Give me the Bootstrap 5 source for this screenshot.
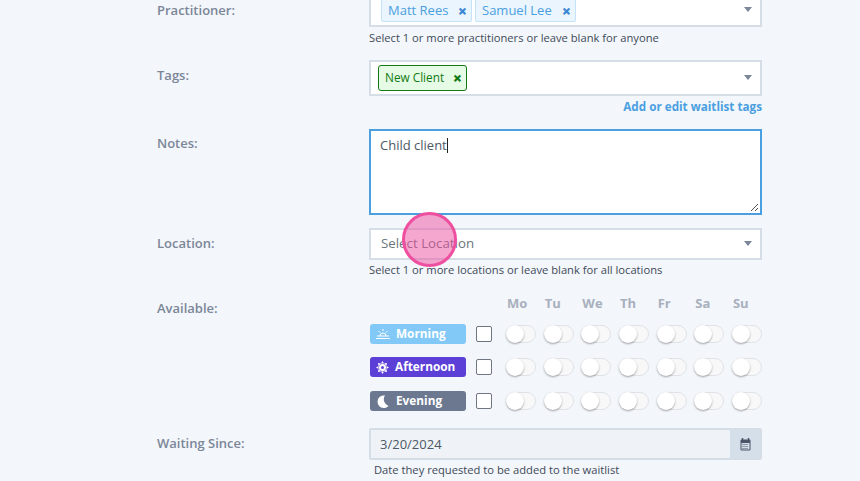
<!DOCTYPE html>
<html lang="en"><head><meta charset="utf-8"><title>Waitlist</title>
<link href="https://cdn.jsdelivr.net/npm/bootstrap@5.3.0/dist/css/bootstrap.min.css" rel="stylesheet">
<style>
html,body{height:481px;overflow:hidden}
body{background:#f3f6fb;font-family:"Open Sans",sans-serif;color:#3e4a59;position:relative}
.sheet{width:605px;margin:-6px 0 0 157px}
.frow{display:flex}
.flabel{width:212px;flex:none;font-size:13px;font-weight:600;color:#7b8698;line-height:18px;padding-top:6px}
.lab-p{padding-top:7px}
.lab-n{padding-top:5px}
.fbody{width:393px;flex:none}
.selbox{background:#fff;border:2px solid #d5dde7;display:flex;align-items:center;justify-content:space-between;padding:0 8px 0 7px;font-size:13px}
.caret{width:0;height:0;border-left:4px solid transparent;border-right:4px solid transparent;border-top:5px solid #7b8698;flex:none;margin-top:-2px}
.chip{display:inline-flex;align-items:center;justify-content:space-between;font-size:13px;height:23px;padding:0 4px 0 6px;border:1px solid #c4e2f8;background:#eaf5fd;color:#4a9fe0;border-radius:2px;margin-right:3px}
.chip b{font-size:16px;line-height:1;font-weight:800;color:#3b87d6}
.chip-a{width:91px}.chip-b{width:101px}
.chipg{width:89px;border-color:#127a12;background:#e6fbe6;color:#127a12;border-radius:3px;font-size:11.8px;height:26px}
.chipg b{color:#127a12}
.hint{font-size:11.2px;line-height:15px;color:#3e4a59;margin-top:2px}
.hint-p{margin-top:3px}
.hint-d{padding-left:5px}
.tlink{font-size:11.7px;font-weight:700;color:#4a9fe0;text-align:right;line-height:16px;text-decoration:none;display:block;margin-top:2px}
.notes{height:86px;background:#fff;border:2px solid #4a9fe0;font-size:13px;padding:5px 9px;line-height:18px;position:relative;color:#4d5866}
.cursor{display:inline-block;width:1px;height:15px;background:#222;vertical-align:-3px}
.grip{position:absolute;right:1px;bottom:1px}
.dhead{display:flex;margin:1px 0 12px 133px}
.dhead span{width:37.67px;flex:none;font-size:13px;font-weight:700;color:#a8b0bd;line-height:18px;padding-left:5px}
.slotrow{display:flex;align-items:center;height:20px;padding-left:1px}
.gap-a{margin-bottom:13px}.gap-b{margin-bottom:14px}
.slot{width:96px;height:20px;border-radius:3px;color:#fff;font-size:11.8px;font-weight:700;display:flex;align-items:center;padding-left:6px;gap:6px;flex:none}
.morn{background:#83c9f8}.aft{background:#5c3fd6}.eve{background:#6c788f;padding-left:7px;gap:7px}
.tick{width:16px;height:16px;border:1.5px solid #6e7682;border-radius:2px;background:#fff;margin-left:10px;margin-right:14px;flex:none}
.tog{width:30px;height:18px;border:1px solid #dfe2e6;border-radius:9px;background:#f8f8f8;margin-right:7.67px;flex:none;position:relative}
.tog::before{content:"";position:absolute;left:-1px;top:-1px;width:18px;height:18px;border-radius:50%;background:#fff;box-shadow:0 1px 2px rgba(0,0,0,.35)}
.dateg{display:flex;height:32px;border:2px solid #d5dde7;border-radius:2px;background:#eff3f7;font-size:13px}
.dateg .dv{flex:1;padding-left:9px;line-height:28px;color:#4d5866}
.dateg .da{width:30px;background:#d5dfea;display:flex;align-items:center;justify-content:center}
.blob{position:absolute;left:402px;top:212px;width:55px;height:55px;border-radius:50%;background:rgba(238,80,160,.5);border:3px solid #ee4f9f}
</style></head><body>
<div class="sheet">
  <div class="frow" style="height:66px">
    <div class="flabel lab-p">Practitioner:</div>
    <div class="fbody">
      <div class="selbox" style="height:33px;padding-left:10px"><div class="d-flex"><span class="chip chip-a">Matt Rees<b>×</b></span><span class="chip chip-b">Samuel Lee<b>×</b></span></div><i class="caret"></i></div>
      <div class="hint hint-p">Select 1 or more practitioners or leave blank for anyone</div>
    </div>
  </div>
  <div class="frow" style="height:69px">
    <div class="flabel">Tags:</div>
    <div class="fbody">
      <div class="selbox" style="height:36px"><span class="chip chipg">New Client<b>×</b></span><i class="caret"></i></div>
      <a class="tlink" href="#">Add or edit waitlist tags</a>
    </div>
  </div>
  <div class="frow" style="height:99px">
    <div class="flabel lab-n">Notes:</div>
    <div class="fbody"><div class="notes">Child client<span class="cursor"></span>
      <svg class="grip" width="9" height="9" viewBox="0 0 9 9"><path d="M8 1 1 8M8 5 5 8" stroke="#555" fill="none"/></svg></div></div>
  </div>
  <div class="frow" style="height:65px">
    <div class="flabel">Location:</div>
    <div class="fbody">
      <div class="selbox" style="height:32px;padding-left:10px;color:#6c757d;font-size:13.3px"><span>Select Location</span><i class="caret"></i></div>
      <div class="hint">Select 1 or more locations or leave blank for all locations</div>
    </div>
  </div>
  <div class="frow" style="height:135px">
    <div class="flabel">Available:</div>
    <div class="fbody">
      <div class="dhead"><span>Mo</span><span>Tu</span><span>We</span><span>Th</span><span>Fr</span><span>Sa</span><span>Su</span></div>
      <div class="slotrow gap-a"><div class="slot morn"><svg width="14" height="12" viewBox="0 0 14 12" fill="none" stroke="#fff"><path d="M0 10.500h14M1 8h12M4 8a3 3 0 0 1 6 0M7 1v2M2.500 3 4 4.500M11.500 3 10 4.500"/></svg>Morning</div><i class="tick"></i><i class="tog"></i><i class="tog"></i><i class="tog"></i><i class="tog"></i><i class="tog"></i><i class="tog"></i><i class="tog"></i></div>
      <div class="slotrow gap-b"><div class="slot aft"><svg width="13" height="13" viewBox="0 0 13 13" fill="#fff"><circle cx="6.500" cy="6.500" r="3.500"/><path d="M6.500 0 8 2.500H5zM6.500 13 5 10.500h3zM0 6.500 2.500 5v3zM13 6.500 10.500 8V5zM2 2l3 .6L2.600 5zM11 2l-.6 3L8 2.600zM2 11l.6-3L5 10.400zM11 11l-3-.6L10.400 8z"/><circle cx="6.500" cy="6.500" r="1.500" fill="#5c3fd6"/></svg>Afternoon</div><i class="tick"></i><i class="tog"></i><i class="tog"></i><i class="tog"></i><i class="tog"></i><i class="tog"></i><i class="tog"></i><i class="tog"></i></div>
      <div class="slotrow"><div class="slot eve"><svg width="12" height="13" viewBox="0 0 12 13" fill="#fff"><path d="M8 .5A6.300 6.300 0 1 0 11.500 11 7 7 0 0 1 8 .5z"/></svg>Evening</div><i class="tick"></i><i class="tog"></i><i class="tog"></i><i class="tog"></i><i class="tog"></i><i class="tog"></i><i class="tog"></i><i class="tog"></i></div>
    </div>
  </div>
  <div class="frow">
    <div class="flabel">Waiting Since:</div>
    <div class="fbody">
      <div class="dateg"><div class="dv">3/20/2024</div><div class="da"><svg width="11" height="13" viewBox="0 0 11 13"><path d="M2.500 0v2M8.500 0v2" stroke="#4a5568" stroke-width="1.500"/><rect x=".5" y="1.500" width="10" height="11" rx="1" fill="#4a5568"/><rect x="1.500" y="5" width="8" height="6.500" fill="#d5dfea"/><path d="M2.500 6.500h6M2.500 8.500h6M2.500 10.500h6" stroke="#4a5568" stroke-dasharray="1 1"/></svg></div></div>
      <div class="hint hint-d">Date they requested to be added to the waitlist</div>
    </div>
  </div>
</div>
<div class="blob"></div>
</body></html>
